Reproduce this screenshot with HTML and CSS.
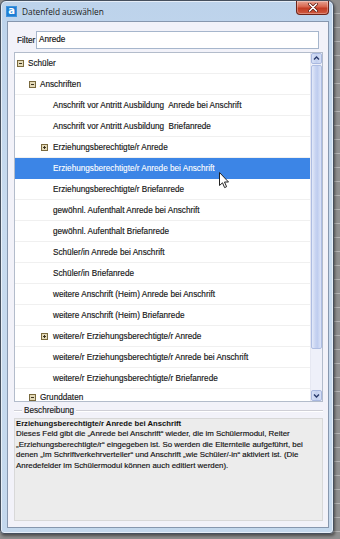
FILE: index.html
```html
<!DOCTYPE html>
<html lang="de">
<head>
<meta charset="utf-8">
<title>Datenfeld auswählen</title>
<link rel="stylesheet" href="styles.css">
</head>
<body>
<div class="screen">
  <div class="window">
    <div class="titlebar">
      <span class="appicon">a</span>
      <span class="title">Datenfeld auswählen</span>
      <span class="close">
        <svg width="10" height="9" viewBox="0 0 10 9">
          <path d="M1.5 1 L8.5 8 M8.5 1 L1.5 8" stroke="#5a1a10" stroke-width="3" stroke-linecap="round"/>
          <path d="M1.5 1 L8.5 8 M8.5 1 L1.5 8" stroke="#ffffff" stroke-width="1.6" stroke-linecap="round"/>
        </svg>
      </span>
    </div>
    <div class="client">
      <div class="filter-row">
        <span class="filter-label">Filter</span>
        <div class="input">Anrede</div>
      </div>
      <div class="listbox">
        <div class="tree">
          <div class="row l1"><span class="exp"><svg width="7" height="7" viewBox="0 0 7 7"><rect x="0.5" y="0.5" width="6" height="6" fill="#e4dab8" stroke="#7a6a3e"/><path d="M2 3.5 H5" stroke="#3b3220"/></svg></span><span class="txt">Schüler</span></div>
          <div class="row l2"><span class="exp"><svg width="7" height="7" viewBox="0 0 7 7"><rect x="0.5" y="0.5" width="6" height="6" fill="#e4dab8" stroke="#7a6a3e"/><path d="M2 3.5 H5" stroke="#3b3220"/></svg></span><span class="txt">Anschriften</span></div>
          <div class="row l3"><span class="exp"></span><span class="txt">Anschrift vor Antritt Ausbildung  Anrede bei Anschrift</span></div>
          <div class="row l3"><span class="exp"></span><span class="txt">Anschrift vor Antritt Ausbildung  Briefanrede</span></div>
          <div class="row l3"><span class="exp"><svg width="7" height="7" viewBox="0 0 7 7"><rect x="0.5" y="0.5" width="6" height="6" fill="#e4dab8" stroke="#7a6a3e"/><path d="M2 3.5 H5 M3.5 2 V5" stroke="#3b3220"/></svg></span><span class="txt">Erziehungsberechtigte/r Anrede</span></div>
          <div class="row l3 selected"><span class="exp"></span><span class="txt">Erziehungsberechtigte/r Anrede bei Anschrift</span></div>
          <div class="row l3"><span class="exp"></span><span class="txt">Erziehungsberechtigte/r Briefanrede</span></div>
          <div class="row l3"><span class="exp"></span><span class="txt">gewöhnl. Aufenthalt Anrede bei Anschrift</span></div>
          <div class="row l3"><span class="exp"></span><span class="txt">gewöhnl. Aufenthalt Briefanrede</span></div>
          <div class="row l3"><span class="exp"></span><span class="txt">Schüler/in Anrede bei Anschrift</span></div>
          <div class="row l3"><span class="exp"></span><span class="txt">Schüler/in Briefanrede</span></div>
          <div class="row l3"><span class="exp"></span><span class="txt">weitere Anschrift (Heim) Anrede bei Anschrift</span></div>
          <div class="row l3"><span class="exp"></span><span class="txt">weitere Anschrift (Heim) Briefanrede</span></div>
          <div class="row l3"><span class="exp"><svg width="7" height="7" viewBox="0 0 7 7"><rect x="0.5" y="0.5" width="6" height="6" fill="#e4dab8" stroke="#7a6a3e"/><path d="M2 3.5 H5 M3.5 2 V5" stroke="#3b3220"/></svg></span><span class="txt">weitere/r Erziehungsberechtigte/r Anrede</span></div>
          <div class="row l3"><span class="exp"></span><span class="txt">weitere/r Erziehungsberechtigte/r Anrede bei Anschrift</span></div>
          <div class="row l3"><span class="exp"></span><span class="txt">weitere/r Erziehungsberechtigte/r Briefanrede</span></div>
          <div class="row l2 last"><span class="exp"><svg width="7" height="7" viewBox="0 0 7 7"><rect x="0.5" y="0.5" width="6" height="6" fill="#e4dab8" stroke="#7a6a3e"/><path d="M2 3.5 H5" stroke="#3b3220"/></svg></span><span class="txt">Grunddaten</span></div>
        </div>
        <div class="scrollbar">
          <div class="sb-btn"><svg width="9" height="9" viewBox="0 0 9 9"><path d="M2 5.5 L4.5 3 L7 5.5" fill="none" stroke="#2a3a6a" stroke-width="1.4"/></svg></div>
          <div class="thumb"></div>
          <div class="track"></div>
          <div class="sb-btn"><svg width="9" height="9" viewBox="0 0 9 9"><path d="M2 3.5 L4.5 6 L7 3.5" fill="none" stroke="#2a3a6a" stroke-width="1.4"/></svg></div>
        </div>
      </div>
      <div class="group-head"><span class="gh-line short"></span><span class="gh-text">Beschreibung</span><span class="gh-line"></span></div>
      <div class="desc">
        <div class="desc-title">Erziehungsberechtigte/r Anrede bei Anschrift</div>
        <div class="desc-line">Dieses Feld gibt die „Anrede bei Anschrift“ wieder, die im Schülermodul, Reiter</div>
        <div class="desc-line">„Erziehungsberechtigte/r“ eingegeben ist. So werden die Elternteile aufgeführt, bei</div>
        <div class="desc-line">denen „Im Schriftverkehrverteiler“ und Anschrift „wie Schüler/-in“ aktiviert ist. (Die</div>
        <div class="desc-line">Anredefelder im Schülermodul können auch editiert werden).</div>
      </div>
    </div>
  </div>
  <svg class="cursor" width="12" height="18" viewBox="0 0 12 18">
    <path d="M0.5 0.5 L0.5 13.5 L3.5 10.8 L5.6 15.6 L7.6 14.7 L5.5 10 L9.5 10 Z" fill="#ffffff" stroke="#222222" stroke-width="1" stroke-linejoin="round"/>
  </svg>
</div>
</body>
</html>
```

FILE: styles.css
```css
html, body {
  margin: 0;
  padding: 0;
}

body {
  font-family: "Liberation Sans", Arial, sans-serif;
  color: #1a1a1a;
}

.screen {
  width: 340px;
  height: 539px;
  position: relative;
  overflow: hidden;
  background: repeating-linear-gradient(to bottom, #8f8f8f 0, #8f8f8f 13px, #b4b4b4 13px, #b4b4b4 14px);
}

.window {
  width: 334px;
  height: 534px;
  box-sizing: border-box;
  border: 1px solid #46505e;
  border-radius: 6px 6px 4px 4px;
  background: linear-gradient(to bottom, #bdd3eb 0, #c8dbef 40%, #c4d8ed 100%);
  box-shadow: 1px 2px 3px rgba(0, 0, 0, 0.45), inset 0 0 0 1px rgba(255, 255, 255, 0.6);
  display: flex;
  flex-direction: column;
}

.titlebar {
  height: 20px;
  flex: none;
  display: flex;
  align-items: flex-start;
  padding: 0 4px 0 5px;
}

.appicon {
  width: 11px;
  height: 11px;
  margin-top: 5px;
  background: #1f7ed3;
  border-radius: 1px;
  color: #ffffff;
  font-family: "DejaVu Sans", sans-serif;
  font-weight: bold;
  font-size: 10px;
  line-height: 10px;
  text-align: center;
  box-shadow: inset 0 0 0 1px #3d93de;
}

.title {
  margin-left: 5px;
  font-family: "Open Sans", "Liberation Sans", sans-serif;
  font-size: 8.3px;
  line-height: 22px;
  color: #1a1a1a;
}

.close {
  margin-left: auto;
  width: 33px;
  height: 14px;
  box-sizing: border-box;
  border: 1px solid #6e2418;
  border-top: none;
  border-radius: 0 0 4px 4px;
  background: linear-gradient(to bottom, #e6a494 0, #d8644c 45%, #c23c24 55%, #cf5a40 100%);
  box-shadow: inset 0 0 0 1px rgba(255, 255, 255, 0.3);
  display: flex;
  align-items: center;
  justify-content: center;
}

.client {
  flex: 1;
  min-height: 0;
  margin: 0 4px 5px 6px;
  border: 1px solid #8797ae;
  background: #f2f2f9;
  display: flex;
  flex-direction: column;
  padding: 0 5px 6px 6px;
}

.filter-row {
  margin-top: 9px;
  height: 18px;
  flex: none;
  display: flex;
  align-items: center;
  margin-right: 4px;
}

.filter-label {
  width: 22px;
  padding-left: 3px;
  font-size: 8.2px;
  box-sizing: border-box;
  color: #111111;
  -webkit-text-stroke: 0.15px #111111;
}

.input {
  flex: 1;
  height: 18px;
  box-sizing: border-box;
  border: 1px solid #a6b6cc;
  background: #ffffff;
  font-size: 8.2px;
  line-height: 16px;
  padding-left: 2px;
  color: #111111;
  -webkit-text-stroke: 0.15px #111111;
}

.listbox {
  margin-top: 3px;
  height: 350px;
  flex: none;
  box-sizing: border-box;
  border: 1px solid #b3bccb;
  background: #ffffff;
  display: flex;
}

.tree {
  flex: 1;
  overflow: hidden;
}

.row {
  height: 20px;
  border-bottom: 1px solid #f0f0f0;
  display: flex;
  align-items: center;
  font-size: 8.2px;
  white-space: pre;
  color: #161616;
  -webkit-text-stroke: 0.15px #161616;
}

.row.last {
  padding-bottom: 2px;
  box-sizing: border-box;
}

.row.l1 { padding-left: 2px; }
.row.l2 { padding-left: 14px; }
.row.l3 { padding-left: 26px; }

.exp {
  width: 7px;
  height: 7px;
  margin-right: 4px;
  flex: none;
  display: flex;
}

.row.l3 .exp {
  margin-right: 5px;
}

.row.selected {
  background: #3c85e6;
  border-bottom-color: #3c85e6;
  color: #ffffff;
  -webkit-text-stroke: 0.1px #ffffff;
}

.scrollbar {
  width: 11px;
  flex: none;
  display: flex;
  flex-direction: column;
  background: #eef0f9;
  border-left: 1px solid #e6e8f2;
}

.sb-btn {
  height: 11px;
  flex: none;
  box-sizing: border-box;
  border: 1px solid #a9b8df;
  border-radius: 2px;
  background: linear-gradient(to right, #d8e1f6, #c3d0ef 50%, #d5def5);
  display: flex;
  align-items: center;
  justify-content: center;
}

.thumb {
  height: 284px;
  margin-top: 1px;
  flex: none;
  box-sizing: border-box;
  border: 1px solid #aebde2;
  border-radius: 2px;
  background: linear-gradient(to right, #e3e9f9, #c7d3f1 40%, #bfcdef 60%, #dbe3f7);
}

.track {
  flex: 1;
}

.group-head {
  margin-top: 2px;
  height: 13px;
  flex: none;
  display: flex;
  align-items: center;
}

.gh-line {
  flex: 1;
  border-top: 1px solid #cfcfd6;
  border-bottom: 1px solid #ffffff;
}

.gh-line.short {
  flex: none;
  width: 8px;
}

.gh-text {
  padding: 0 2px;
  font-size: 8.2px;
  color: #1a1a1a;
  -webkit-text-stroke: 0.15px #1a1a1a;
}

.desc {
  margin-top: 1px;
  flex: 1;
  box-sizing: border-box;
  border: 1px solid #d8d8d8;
  background: #ececec;
  padding: 0 1px;
  font-size: 7.9px;
  line-height: 10.4px;
  color: #111111;
  -webkit-text-stroke: 0.15px #111111;
  white-space: nowrap;
}

.desc-title {
  font-weight: bold;
  font-size: 7.7px;
  -webkit-text-stroke: 0;
}

.cursor {
  position: absolute;
  left: 219px;
  top: 172px;
}
```
